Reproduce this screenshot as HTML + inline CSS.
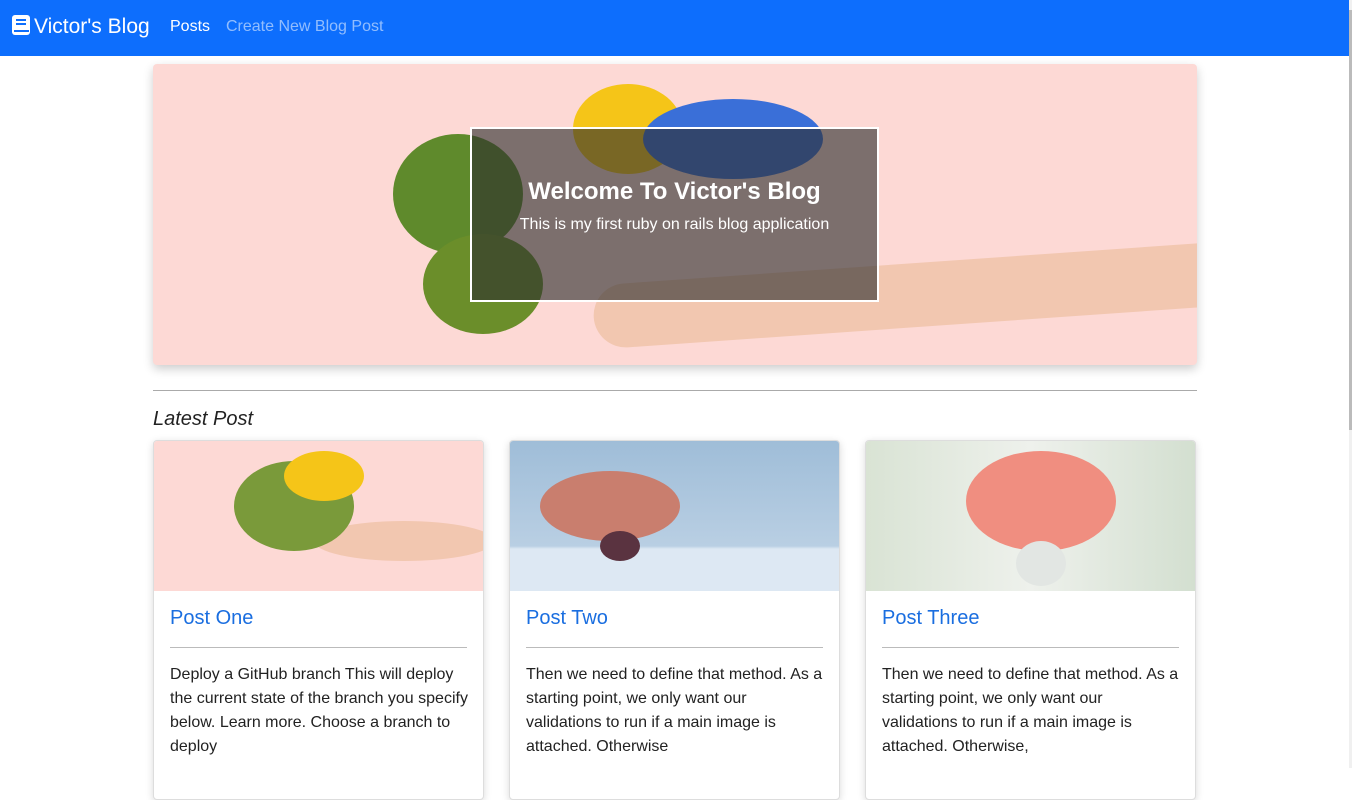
<!DOCTYPE html>
<html><head><style>
*{box-sizing:border-box;margin:0;padding:0}
body{width:1352px;height:768px;overflow:hidden;background:#fff;font-family:"Liberation Sans",sans-serif;position:relative}
.nav{position:absolute;left:0;top:0;width:1349px;height:56px;background:#0d6efd}
.nav .brand{position:absolute;left:12px;top:15px;color:#fff;font-size:21px}
.nav .brand svg{vertical-align:-2px;margin-right:4px}
.nav .l1{position:absolute;left:170px;top:18px;color:#fff;font-size:16px}
.nav .l2{position:absolute;left:226px;top:18px;color:rgba(255,255,255,.55);font-size:16px}
.sb{position:absolute;right:0;top:0;width:3px;height:768px;background:#f0f0f0}
.sb div{width:3px;height:420px;margin-top:10px;background:#bbb}
.hero{position:absolute;left:153px;top:64px;width:1044px;height:301px;background:#fdd9d5;border-radius:4px;box-shadow:0 4px 10px rgba(0,0,0,.2);overflow:hidden}
.blob{position:absolute;border-radius:50%}
.box{position:absolute;left:317px;top:63px;width:409px;height:175px;border:2px solid #fff;background:rgba(45,45,45,.62);color:#fff;text-align:center}
.box h1{font-size:24px;margin-top:49px}
.box p{font-size:16px;margin-top:10px}
hr.m{position:absolute;left:153px;top:390px;width:1044px;border:0;border-top:1px solid #aaa}
.lp{position:absolute;left:153px;top:408px;font-size:20px;font-style:italic;color:#222}
.card{position:absolute;top:440px;width:331px;height:360px;border:1px solid #ddd;border-radius:4px;box-shadow:0 2px 8px rgba(0,0,0,.15);overflow:hidden;background:#fff}
.img{height:150px;position:relative;overflow:hidden}
.card h3{font-weight:normal;color:#1a6ee0;font-size:20px;margin:166px 16px 0;position:absolute;top:0}
.card .hr{position:absolute;left:16px;right:16px;top:206px;border-top:1px solid #bbb}
.card p{position:absolute;left:16px;right:14px;top:222px;font-size:16px;line-height:24px;color:#222}
</style></head><body>
<div class="nav"><div class="brand"><svg width="18" height="20" viewBox="0 0 18 20"><rect x="0" y="0" width="18" height="20" rx="3" fill="#fff"/><rect x="4" y="4" width="10" height="2" fill="#0d6efd"/><rect x="4" y="8" width="10" height="2" fill="#0d6efd"/><rect x="2" y="15" width="15" height="2" fill="#0d6efd"/></svg>Victor's Blog</div><div class="l1">Posts</div><div class="l2">Create New Blog Post</div></div>
<div class="sb"><div></div></div>
<div class="hero">
<div class="blob" style="left:440px;top:200px;width:620px;height:64px;background:#f2c7b0;border-radius:40px 0 0 40px;transform:rotate(-4deg)"></div>
<div class="blob" style="left:240px;top:70px;width:130px;height:120px;background:#5f8a2c"></div>
<div class="blob" style="left:270px;top:170px;width:120px;height:100px;background:#6b8e2a"></div>
<div class="blob" style="left:420px;top:20px;width:110px;height:90px;background:#f5c518"></div>
<div class="blob" style="left:490px;top:35px;width:180px;height:80px;background:#3a6fd8"></div>
<div class="box"><h1>Welcome To Victor's Blog</h1><p>This is my first ruby on rails blog application</p></div>
</div>
<hr class="m"><div class="lp">Latest Post</div>
<div class="card" style="left:153px"><div class="img" style="background:#fdd9d5"><div class="blob" style="left:160px;top:80px;width:180px;height:40px;background:#f2c7b0"></div><div class="blob" style="left:80px;top:20px;width:120px;height:90px;background:#7a9a3a"></div><div class="blob" style="left:130px;top:10px;width:80px;height:50px;background:#f5c518"></div></div><h3>Post One</h3><div class="hr"></div><p>Deploy a GitHub branch This will deploy the current state of the branch you specify below. Learn more. Choose a branch to deploy</p></div>
<div class="card" style="left:509px"><div class="img" style="background:linear-gradient(#9fbdd8,#b9cfe3 70%,#dde8f3 72%)"><div class="blob" style="left:30px;top:30px;width:140px;height:70px;background:#c97e6e"></div><div class="blob" style="left:90px;top:90px;width:40px;height:30px;background:#5a3340"></div></div><h3>Post Two</h3><div class="hr"></div><p>Then we need to define that method. As a starting point, we only want our validations to run if a main image is attached. Otherwise</p></div>
<div class="card" style="left:865px"><div class="img" style="background:linear-gradient(90deg,#d9e3d4,#eef1ec 50%,#d3dfd0)"><div class="blob" style="left:100px;top:10px;width:150px;height:100px;background:#f08e80"></div><div class="blob" style="left:150px;top:100px;width:50px;height:45px;background:#e2e6e3"></div></div><h3>Post Three</h3><div class="hr"></div><p>Then we need to define that method. As a starting point, we only want our validations to run if a main image is attached. Otherwise,</p></div>
</body></html>
